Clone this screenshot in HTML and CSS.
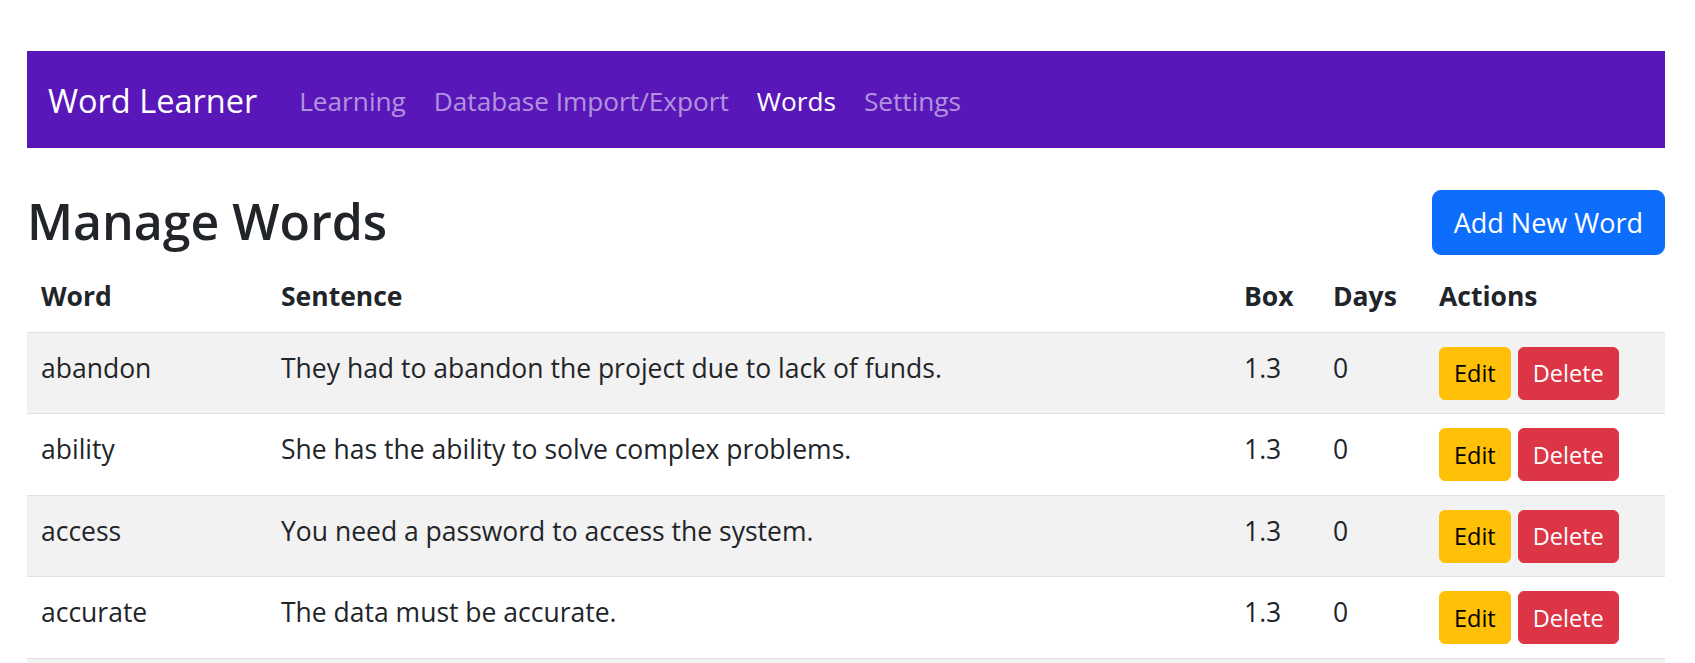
FILE: index.html
```html
<!DOCTYPE html>
<html lang="en">
<head>
<meta charset="utf-8">
<title>Word Learner - Words</title>
<link rel="stylesheet" href="styles.css">
</head>
<body>
<div class="page">
  <nav class="navbar">
    <a class="brand" href="#">Word Learner</a>
    <ul class="nav">
      <li><a class="nav-link" href="#">Learning</a></li>
      <li><a class="nav-link" href="#">Database Import/Export</a></li>
      <li><a class="nav-link active" href="#">Words</a></li>
      <li><a class="nav-link" href="#">Settings</a></li>
    </ul>
  </nav>
  <main class="content">
    <div class="head-row">
      <h2 class="title">Manage Words</h2>
      <button class="btn btn-primary">Add New Word</button>
    </div>
    <table class="table">
      <colgroup>
        <col class="c-word"><col class="c-sentence"><col class="c-box"><col class="c-days"><col class="c-actions">
      </colgroup>
      <thead>
        <tr><th>Word</th><th>Sentence</th><th>Box</th><th>Days</th><th>Actions</th></tr>
      </thead>
      <tbody>
        <tr>
          <td>abandon</td><td>They had to abandon the project due to lack of funds.</td><td>1.3</td><td>0</td>
          <td><div class="actions"><button class="btn-sm btn-warning">Edit</button><button class="btn-sm btn-danger">Delete</button></div></td>
        </tr>
        <tr>
          <td>ability</td><td>She has the ability to solve complex problems.</td><td>1.3</td><td>0</td>
          <td><div class="actions"><button class="btn-sm btn-warning">Edit</button><button class="btn-sm btn-danger">Delete</button></div></td>
        </tr>
        <tr>
          <td>access</td><td>You need a password to access the system.</td><td>1.3</td><td>0</td>
          <td><div class="actions"><button class="btn-sm btn-warning">Edit</button><button class="btn-sm btn-danger">Delete</button></div></td>
        </tr>
        <tr>
          <td>accurate</td><td>The data must be accurate.</td><td>1.3</td><td>0</td>
          <td><div class="actions"><button class="btn-sm btn-warning">Edit</button><button class="btn-sm btn-danger">Delete</button></div></td>
        </tr>
        <tr class="row-more">
          <td></td><td></td><td></td><td></td><td></td>
        </tr>
      </tbody>
    </table>
  </main>
</div>
</body>
</html>
```
FILE: styles.css
```css
* { box-sizing: border-box; }

html, body {
  margin: 0;
  padding: 0;
  background: #fff;
}

body {
  font-family: "Open Sans", "Noto Sans", "Liberation Sans", sans-serif;
  color: #212529;
  font-size: 26.5px;
}

.page {
  padding: 51px 30px 0 27px;
}

.navbar {
  display: flex;
  align-items: center;
  height: 97px;
  padding: 3px 21px 0;
  background: #5917b9;
}

.brand {
  font-size: 32.5px;
  line-height: 50px;
  color: #fff;
  text-decoration: none;
  margin-right: 28px;
}

.nav {
  display: flex;
  list-style: none;
  margin: 0;
  padding: 0;
}

.nav-link {
  display: block;
  padding: 0 14px;
  font-size: 26.2px;
  line-height: 42px;
  color: rgba(255, 255, 255, 0.55);
  text-decoration: none;
}

.nav-link.active {
  color: #fff;
}

.head-row {
  display: flex;
  justify-content: space-between;
  align-items: center;
  margin-top: 42px;
  height: 65px;
}

.title {
  margin: 0 0 4px;
  font-size: 50px;
  font-weight: 600;
  line-height: 60px;
}

.btn {
  font-family: inherit;
  display: inline-flex;
  align-items: center;
  height: 65px;
  padding: 0 21px;
  font-size: 27px;
  border-radius: 9px;
  border: 1px solid transparent;
  cursor: pointer;
}

.btn-primary {
  background: #0d6efd;
  border-color: #0d6efd;
  color: #fff;
}

.table {
  width: 100%;
  margin-top: 6px;
  border-collapse: collapse;
  table-layout: fixed;
}

.c-word { width: 240px; }
.c-sentence { width: 963px; }
.c-box { width: 89px; }
.c-days { width: 106px; }
.c-actions { width: 240px; }

.table th {
  height: 71px;
  padding: 0 14px;
  text-align: left;
  vertical-align: middle;
  font-weight: 700;
  line-height: 42px;
  border-bottom: 1px solid #dee2e6;
}

.table td {
  padding: 14px 14px 13.5px;
  vertical-align: top;
  line-height: 42px;
  border-bottom: 1px solid #dee2e6;
}

.table tbody tr:nth-child(odd) td {
  background: #f2f2f2;
}

.table .row-more td {
  height: 81px;
}

.actions {
  display: flex;
  gap: 7px;
}

.btn-sm {
  font-family: inherit;
  height: 53px;
  padding: 0 14px;
  font-size: 23.5px;
  border-radius: 6px;
  border: 1px solid transparent;
  cursor: pointer;
}

.btn-warning {
  background: #ffc107;
  border-color: #ffc107;
  color: #000;
}

.btn-danger {
  background: #dc3545;
  border-color: #dc3545;
  color: #fff;
}
```
